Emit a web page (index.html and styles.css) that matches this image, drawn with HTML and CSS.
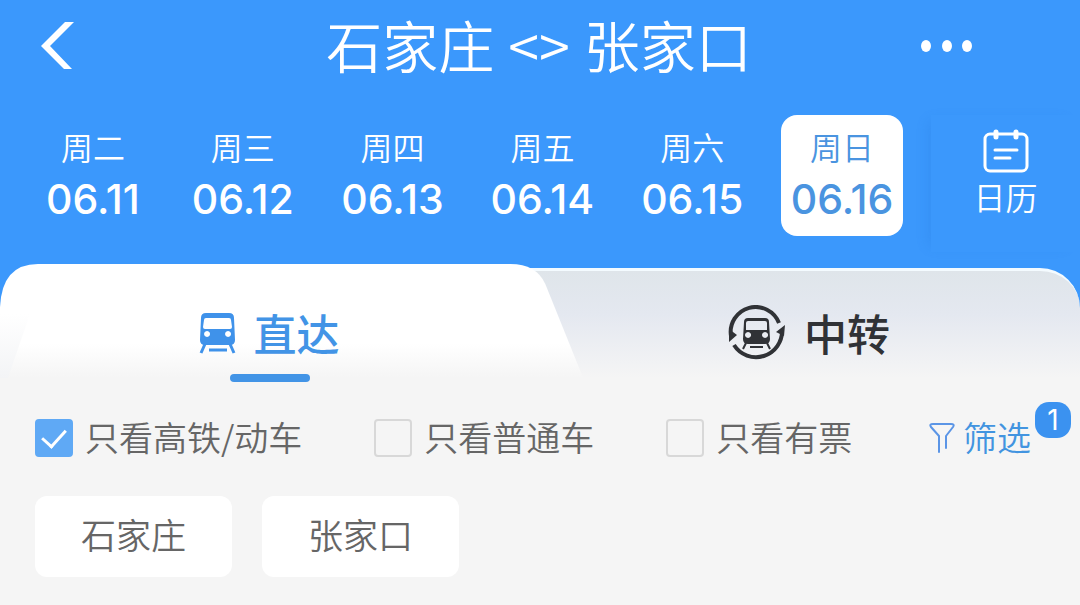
FILE: index.html
```html
<!DOCTYPE html>
<html lang="zh-CN">
  <head>
    <meta charset="UTF-8" />
    <meta name="viewport" content="width=device-width, initial-scale=1.0" />
    <title>石家庄 - 张家口</title>
    <link rel="stylesheet" href="styles.css">
  </head>
  <body>
    <header>
      <div class="topo">
        <button type="button" class="voltar" aria-label="返回">
          <svg width="36" height="48" viewBox="0 0 36 48">
            <path d="M25 0 H34 L10 24 L32 47 H24 L1 24 Z" fill="#fff" />
          </svg>
        </button>
        <h1>
          <span>石家庄</span>
          <span>&lt;&gt;</span>
          <span>张家口</span>
        </h1>
        <button type="button" class="mais" aria-label="更多">
          <svg width="54" height="14" viewBox="0 0 54 14" fill="#fff">
            <ellipse cx="6" cy="7" rx="5" ry="6" />
            <ellipse cx="27" cy="7" rx="5" ry="6" />
            <ellipse cx="47" cy="7" rx="5" ry="6" />
          </svg>
        </button>
      </div>

      <div class="datas">
        <div class="dias">
          <button type="button" class="dia"><span>周二</span><strong>06.11</strong></button>
          <button type="button" class="dia"><span>周三</span><strong>06.12</strong></button>
          <button type="button" class="dia"><span>周四</span><strong>06.13</strong></button>
          <button type="button" class="dia"><span>周五</span><strong>06.14</strong></button>
          <button type="button" class="dia"><span>周六</span><strong>06.15</strong></button>
          <button type="button" class="dia ativo"><span>周日</span><strong>06.16</strong></button>
        </div>
        <button type="button" class="calendario">
          <svg width="46" height="44" viewBox="0 0 46 44" fill="none" stroke="#fff" stroke-width="3" stroke-linecap="round">
            <rect x="2" y="5" width="42" height="37" rx="5" />
            <path d="M13 3 V8 M33 3 V8" stroke-width="5" />
            <path d="M12 21 H34 M12 29 H27" />
          </svg>
          <span>日历</span>
        </button>
      </div>
    </header>

    <nav class="abas">
      <button type="button" class="aba direta">
        <svg class="fundo" viewBox="0 0 585 114" preserveAspectRatio="none">
          <defs>
            <linearGradient id="branco" x1="0" y1="0" x2="0" y2="1">
              <stop offset="0" stop-color="#fff" />
              <stop offset="0.7" stop-color="#fff" />
              <stop offset="1" stop-color="#f5f5f5" />
            </linearGradient>
            <linearGradient id="sombra" x1="0" y1="0" x2="0" y2="1">
              <stop offset="0" stop-color="#fff" />
              <stop offset="1" stop-color="#f3f4f6" />
            </linearGradient>
          </defs>
          <path d="M0 114 V43 Q2 0 38 0 H512 Q538 0 547 20 L585 114 Z" fill="url(#branco)" />
          <path d="M0 50 H30 L8 114 H0 Z" fill="url(#sombra)" />
        </svg>
        <svg class="icone" width="37" height="42" viewBox="0 0 37 42">
          <path fill="#3f92ea" fill-rule="evenodd" d="M7 0 H30 Q35 0 35 5 L36 27 Q36 32 31 32 H6 Q1 32 1 27 L2 5 Q2 0 7 0 Z M7 5 Q5 5 5 7 L4 14 Q4 16 6 16 H31 Q33 16 33 14 L32 7 Q32 5 30 5 Z M8 18 a3 3 0 1 0 .1 0 Z M29 18 a3 3 0 1 0 .1 0 Z" />
          <path d="M6 31 L2 40 M31 31 L35 40 M10 37 H28" fill="none" stroke="#3f92ea" stroke-width="3" />
        </svg>
        <span>直达</span>
      </button>
      <button type="button" class="aba transferencia">
        <svg class="icone" width="58" height="58" viewBox="0 0 58 58">
          <g fill="none" stroke="#303236" stroke-width="4">
            <path d="M3 31 A25 25 0 0 1 51 18" />
            <path d="M54 25 A26 26 0 0 1 6 40" />
          </g>
          <path d="M1 24 L9 30 L1 37 Z M57 20 L48 27 L56 31 Z" fill="#303236" />
          <path fill="#303236" fill-rule="evenodd" d="M20 13 H37 Q41 13 41 17 L42 34 Q42 39 37 39 H20 Q15 39 15 34 L16 17 Q16 13 20 13 Z M20 16 Q18 16 18 18 V25 H39 V18 Q39 16 37 16 Z M20 27 a3 3 0 1 0 .1 0 Z M37 27 a3 3 0 1 0 .1 0 Z" />
          <path d="M18 38 L15 44 M39 38 L42 44 M22 42 H35" fill="none" stroke="#303236" stroke-width="2" />
        </svg>
        <span>中转</span>
      </button>
    </nav>

    <main>
      <div class="filtros">
        <label><input type="checkbox" checked /><span>只看高铁/动车</span></label>
        <label><input type="checkbox" /><span>只看普通车</span></label>
        <label><input type="checkbox" /><span>只看有票</span></label>
        <button type="button" class="filtrar">
          <svg width="26" height="32" viewBox="0 0 26 32" fill="none" stroke="#5b95e6" stroke-width="2" stroke-linecap="round" stroke-linejoin="round">
            <path d="M10 30 V14 L2 5 Q0 2 4 2 H22 Q26 2 24 5 L17 14 V26" />
          </svg>
          <span>筛选</span>
          <b class="contador">1</b>
        </button>
      </div>
      <div class="estacoes">
        <button type="button">石家庄</button>
        <button type="button">张家口</button>
      </div>
    </main>
  </body>
</html>
```
FILE: styles.css
```css
* {
  box-sizing: border-box;
}

body {
  margin: 0;
  font-family: "Noto Sans CJK SC", sans-serif;
  font-weight: 350;
  background: linear-gradient(#3b98fc 320px, #f5f5f5 320px);
  color: #666;
}

button {
  margin: 0;
  padding: 0;
  border: 0;
  background: none;
  font-family: inherit;
  font-weight: inherit;
  color: inherit;
  cursor: pointer;
}

svg {
  display: block;
  flex-shrink: 0;
}

header {
  color: white;
}

.topo {
  display: grid;
  grid-template-columns: 1fr auto 1fr;
  align-items: center;
  height: 92px;
  padding: 0 106px 0 40px;
}

.voltar {
  justify-self: start;
}

.mais {
  justify-self: end;
}

h1 {
  display: flex;
  align-items: center;
  gap: 14px;
  margin: 0;
  padding: 0 0 4px 64px;
  font-size: 56px;
  font-weight: 350;
  line-height: 80px;
}

.datas {
  display: flex;
  padding-top: 23px;
}

.dias {
  flex: 1;
  display: grid;
  grid-template-columns: repeat(6, 1fr);
  align-items: start;
  padding: 0 14px 0 18px;
}

.dia {
  display: flex;
  flex-direction: column;
  align-items: center;
  gap: 2px;
  margin: 0 14px;
  padding: 10px 0 7px;
  border-radius: 16px;
}

.dia span {
  font-size: 32px;
  line-height: 42px;
}

.dia strong {
  font-family: Inter, sans-serif;
  font-size: 41px;
  font-weight: 500;
  line-height: 60px;
}

.dia.ativo {
  background: white;
  color: #4a94e0;
}

.calendario {
  width: 149px;
  height: 137px;
  display: flex;
  flex-direction: column;
  align-items: center;
  padding-top: 14px;
  font-size: 32px;
  line-height: 46px;
  box-shadow: -8px 0 12px -6px rgba(30, 110, 210, 0.2);
}

/* Abas */
.abas {
  display: grid;
  grid-template-columns: 1fr 1fr;
  height: 114px;
  margin-top: 12px;
}

.aba {
  position: relative;
  display: flex;
  align-items: center;
  justify-content: center;
  gap: 18px;
  padding: 32px 2px 6px 0;
  font-size: 43px;
  font-weight: 500;
  line-height: 60px;
}

.aba span {
  padding-bottom: 4px;
}

.fundo {
  position: absolute;
  left: 0;
  top: 0;
  width: 108%;
  height: 100%;
}

.direta {
  z-index: 1;
  color: #4294e6;
}

.direta .icone,
.direta span {
  position: relative;
}

.direta::after {
  content: "";
  position: absolute;
  left: 50%;
  bottom: -4px;
  width: 80px;
  height: 8px;
  margin-left: -40px;
  border-radius: 4px;
  background: #4294e6;
}

.transferencia {
  color: #303236;
}

/* o fundo passa por baixo da aba ativa */
.transferencia::before {
  content: "";
  position: absolute;
  z-index: -1;
  inset: 4px 0 0 -40px;
  border-top: 3px solid #f4fbff;
  border-radius: 0 40px 0 0;
  background: linear-gradient(#dfe5ea, #e4e8f0 40%, #f5f5f5);
}

/* Filtros */
main {
  padding: 32px 35px 28px;
  background: #f5f5f5;
}

.filtros {
  display: flex;
  align-items: center;
  gap: 72px;
  padding-right: 14px;
  font-size: 34px;
  line-height: 54px;
  white-space: nowrap;
}

.filtros label {
  display: flex;
  align-items: center;
  gap: 12px;
}

.filtros span {
  padding-bottom: 2px;
}

.filtros input {
  appearance: none;
  width: 38px;
  height: 38px;
  margin: 0;
  border: 2px solid #d8d8d8;
  border-radius: 4px;
  display: grid;
  place-items: center;
}

.filtros input:checked {
  border-color: #5fa9f5;
  background: #5fa9f5;
}

.filtros input:checked::after {
  content: "";
  width: 11px;
  height: 20px;
  margin-top: -6px;
  border: solid white;
  border-width: 0 3px 3px 0;
  transform: rotate(42deg);
}

.filtrar {
  position: relative;
  display: flex;
  align-items: center;
  gap: 8px;
  margin-left: auto;
  font-size: 34px;
  line-height: 54px;
  color: #4294e0;
}

.contador {
  position: absolute;
  top: -8px;
  right: -40px;
  width: 36px;
  height: 36px;
  border-radius: 14px;
  background: #3b92f0;
  color: white;
  font-family: Inter, sans-serif;
  font-size: 28px;
  font-weight: 400;
  line-height: 36px;
}

.estacoes {
  display: flex;
  gap: 30px;
  margin-top: 30px;
}

.estacoes button {
  padding: 10px 46px 15px;
  border-radius: 12px;
  background: white;
  font-size: 35px;
  line-height: 56px;
}
```
